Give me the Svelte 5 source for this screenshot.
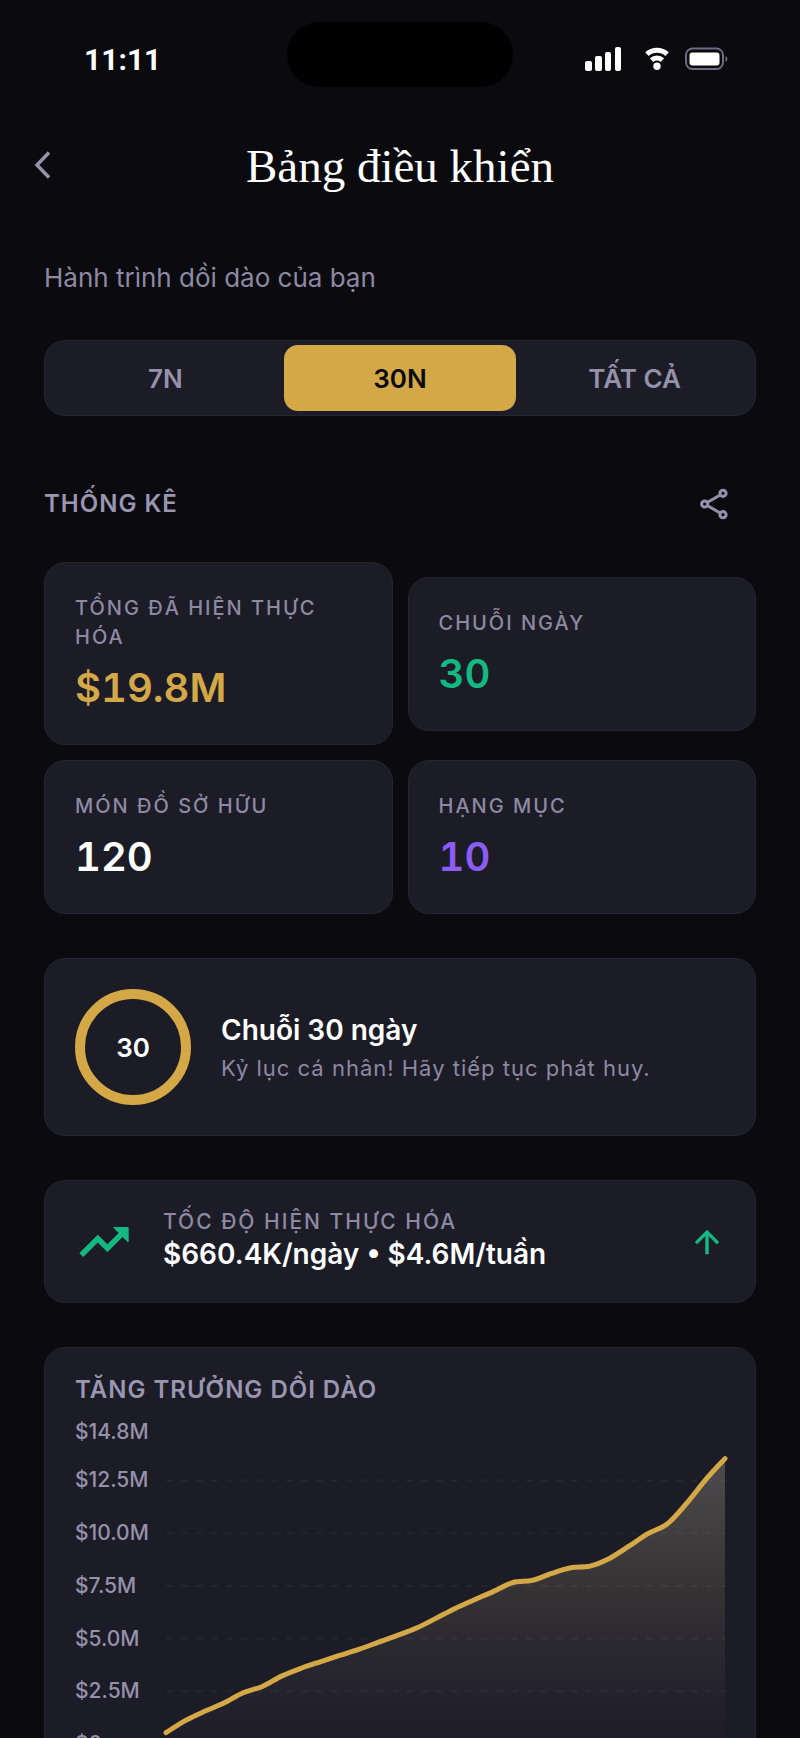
<script lang="ts">
    const ranges = ["7N", "30N", "TẤT CẢ"];
    let selected = $state("30N");

    const stats = [
        { label: "TỔNG ĐÃ HIỆN THỰC HÓA", value: "$19.8M", tone: "gold" },
        { label: "CHUỖI NGÀY", value: "30", tone: "green" },
        { label: "MÓN ĐỒ SỞ HỮU", value: "120", tone: "white" },
        { label: "HẠNG MỤC", value: "10", tone: "purple" },
    ];

    // daily totals, in millions
    const growth = [
        0.54, 1.11, 1.55, 1.94, 2.43, 2.73, 3.22, 3.59, 3.9, 4.2, 4.49, 4.82,
        5.15, 5.5, 5.96, 6.43, 6.84, 7.24, 7.66, 7.76, 8.09, 8.36, 8.44, 8.8,
        9.37, 9.98, 10.44, 11.41, 12.54, 13.54,
    ];
    const ticks = [14.8, 12.5, 10, 7.5, 5, 2.5, 0];
    const max = 14.8;
    const top = 16;
    const plotHeight = 312;
    const left = 91;

    let width = $state(650);

    const y = (v: number) => top + plotHeight * (1 - v / max);

    let points = $derived(
        growth.map((v, i) => [
            left + ((width - left) * i) / (growth.length - 1),
            y(v),
        ])
    );

    // smooth curve through all points
    let line = $derived.by(() => {
        let d = `M${points[0][0]} ${points[0][1]}`;
        for (let i = 0; i < points.length - 1; i++) {
            const p0 = points[i - 1] ?? points[i];
            const p1 = points[i];
            const p2 = points[i + 1];
            const p3 = points[i + 2] ?? p2;
            d += ` C${p1[0] + (p2[0] - p0[0]) / 6} ${p1[1] + (p2[1] - p0[1]) / 6}`;
            d += ` ${p2[0] - (p3[0] - p1[0]) / 6} ${p2[1] - (p3[1] - p1[1]) / 6}`;
            d += ` ${p2[0]} ${p2[1]}`;
        }
        return d;
    });
</script>

<div class="screen">
    <div class="status">
        <span class="time">11:11</span>
        <span class="island"></span>
        <span class="indicators">
            <svg width="36" height="24" viewBox="0 0 36 24" fill="#fff">
                <rect x="0" y="14" width="7" height="10" rx="2" />
                <rect x="10" y="9" width="7" height="15" rx="2" />
                <rect x="20" y="5" width="6" height="19" rx="2" />
                <rect x="30" y="0" width="6" height="24" rx="2" />
            </svg>
            <svg width="24" height="24" viewBox="0 0 24 24">
                <g fill="none" stroke="#fff" stroke-width="5">
                    <path d="M1.9 7.2a15 15 0 0 1 20.2 0" />
                    <path d="M6.6 13.2a8 8 0 0 1 10.8 0" />
                </g>
                <circle cx="12" cy="19.300" r="3.700" fill="#fff" />
            </svg>
            <svg width="43" height="24" viewBox="0 0 43 24">
                <rect x="1" y="1.500" width="37" height="20.500" rx="6.500" fill="none" stroke="#6f6b80" stroke-width="2" />
                <rect x="4.500" y="5.500" width="30" height="13" rx="3" fill="#fff" />
                <path d="M40.500 9v6q2-1 2-3t-2-3z" fill="#6f6b80" />
            </svg>
        </span>
    </div>

    <header>
        <button class="back" aria-label="Quay lại">
            <svg width="18" height="30" viewBox="0 0 18 30">
                <path d="M15 2.500 3 15l12 12.500" fill="none" stroke="currentColor" stroke-width="3.500" />
            </svg>
        </button>
        <h1>Bảng điều khiển</h1>
    </header>

    <main>
        <p class="subtitle">Hành trình dồi dào của bạn</p>

        <div class="segments">
            {#each ranges as range}
                <button
                    class:active={selected === range}
                    aria-pressed={selected === range}
                    onclick={() => (selected = range)}>{range}</button
                >
            {/each}
        </div>

        <div class="section">
            <h2>THỐNG KÊ</h2>
            <button class="share" aria-label="Chia sẻ">
                <svg width="28" height="32" viewBox="0 0 28 32">
                    <g fill="none" stroke="currentColor" stroke-width="3">
                        <circle cx="4.700" cy="16" r="3.100" />
                        <circle cx="23" cy="5.300" r="3.100" />
                        <circle cx="23" cy="26.700" r="3.100" />
                        <path d="M7.600 14.300 20.200 7M7.600 17.700 20.200 25" />
                    </g>
                </svg>
            </button>
        </div>

        <div class="stats">
            {#each stats as stat}
                <div class="card stat">
                    <div class="label">{stat.label}</div>
                    <div class="value {stat.tone}">{stat.value}</div>
                </div>
            {/each}
        </div>

        <section class="card streak">
            <div class="ring">30</div>
            <div class="streak-text">
                <h3>Chuỗi 30 ngày</h3>
                <p>Kỷ lục cá nhân! Hãy tiếp tục phát huy.</p>
            </div>
        </section>

        <section class="card rate">
            <svg class="trend" width="58" height="58" viewBox="0 0 24 24">
                <path
                    d="M16 6l2.290 2.290-4.880 4.880-4-4L2 16.590 3.410 18l6-6 4 4 6.300-6.290L22 12V6z"
                    fill="currentColor"
                    stroke="currentColor"
                    stroke-width="0.400"
                />
            </svg>
            <div class="rate-text">
                <div class="label">TỐC ĐỘ HIỆN THỰC HÓA</div>
                <div class="amount">$660.4K/ngày • $4.6M/tuần</div>
            </div>
            <svg class="up" width="36" height="36" viewBox="0 0 24 24">
                <path
                    d="M4 12l1.410 1.410L11 7.830V20h2V7.830l5.580 5.590L20 12l-8-8z"
                    fill="currentColor"
                    stroke="currentColor"
                    stroke-width="0.300"
                />
            </svg>
        </section>

        <section class="card chart">
            <h2>TĂNG TRƯỞNG DỒI DÀO</h2>
            <div class="plot" bind:clientWidth={width}>
                <svg {width} height="350">
                    <defs>
                        <linearGradient id="area" x1="0" y1="0" x2="0" y2="1">
                            <stop offset="0" stop-color="#4c4b4d" />
                            <stop offset="0.250" stop-color="#413e3f" />
                            <stop offset="0.450" stop-color="#353334" />
                            <stop offset="0.700" stop-color="#29272f" />
                            <stop offset="1" stop-color="#1d1c28" />
                        </linearGradient>
                    </defs>
                    <path d="{line} V{y(0)} H{left} Z" fill="url(#area)" />
                    {#each ticks as tick}
                        <text x="0" y={y(tick) + 7}>
                            {tick ? `$${tick.toFixed(1)}M` : "$0"}
                        </text>
                        {#if tick < max}
                            <line class="grid" x1={left} x2={width} y1={y(tick)} y2={y(tick)} />
                        {/if}
                    {/each}
                    <path class="line" d={line} />
                </svg>
            </div>
        </section>
    </main>
</div>

<style>
    :global(body) {
        background: #0a0a0f;
    }

    .screen {
        height: 100vh;
        overflow-y: auto;
        scrollbar-width: none;
        background: #0a0a0f;
        color: #fff;
        font-family: Inter, "Noto Sans", sans-serif;
    }

    h1,
    h2,
    h3,
    p {
        margin: 0;
    }

    button {
        border: 0;
        padding: 0;
        background: none;
        font: inherit;
        cursor: pointer;
    }

    svg {
        display: block;
        overflow: visible;
    }

    .status {
        display: grid;
        grid-template-columns: 1fr auto 1fr;
        align-items: center;
        padding: 22px 72px 0;
    }

    .time {
        padding: 10px 0 0 12px;
        font-family: Roboto, sans-serif;
        font-size: 30px;
        line-height: 36px;
        font-weight: 700;
    }

    .island {
        width: 226px;
        height: 65px;
        border-radius: 33px;
        background: #000;
    }

    .indicators {
        display: flex;
        justify-content: flex-end;
        gap: 16px;
        padding-top: 8px;
    }

    .indicators svg:first-child {
        margin-right: 8px;
    }

    header {
        display: grid;
        grid-template-columns: 56px 1fr 56px;
        align-items: center;
        margin-top: 44px;
        height: 66px;
    }

    .back {
        display: flex;
        justify-content: flex-end;
        padding-right: 4px;
        color: #9691ab;
    }

    h1 {
        grid-column: 2;
        padding-top: 2px;
        font-family: Baskerville, "Liberation Serif", serif;
        font-size: 47px;
        line-height: 66px;
        font-weight: 400;
        text-align: center;
    }

    main {
        padding: 0 44px 44px;
    }

    .subtitle {
        padding-top: 63px;
        font-size: 26px;
        line-height: 36px;
        color: #8e89a3;
    }

    .segments {
        display: grid;
        grid-template-columns: repeat(3, 1fr);
        gap: 2px;
        margin-top: 44px;
        padding: 4px;
        background: #1c1c27;
        border: 1px solid #25252f;
        border-radius: 21px;
    }

    .segments button {
        height: 66px;
        border-radius: 14px;
        font-size: 26px;
        font-weight: 600;
        color: #9691ab;
    }

    .segments button.active {
        background: #d4a847;
        color: #0a0a0f;
    }

    .section {
        display: flex;
        align-items: center;
        justify-content: space-between;
        height: 58px;
        margin: 59px 28px 29px 0;
    }

    h2 {
        font-size: 24px;
        line-height: 30px;
        font-weight: 600;
        letter-spacing: 1px;
        color: #9a95b0;
    }

    .share {
        color: #9691ab;
    }

    .stats {
        display: grid;
        grid-template-columns: 1fr 1fr;
        align-items: center;
        gap: 15px;
    }

    .card {
        background: #1c1c27;
        border: 1px solid #25252f;
        border-radius: 21px;
        padding: 30px;
    }

    .stat {
        padding-top: 31px;
    }

    .label {
        font-size: 20px;
        line-height: 29px;
        font-weight: 500;
        letter-spacing: 2px;
        color: #8e89a3;
    }

    .value {
        margin-top: 10px;
        font-size: 40px;
        line-height: 52px;
        font-weight: 600;
        font-variant-numeric: tabular-nums;
    }

    .gold {
        color: #d4a847;
    }

    .green {
        color: #14b881;
    }

    .purple {
        color: #8b5cf6;
    }

    .streak {
        display: flex;
        align-items: center;
        gap: 30px;
        margin-top: 44px;
    }

    .ring {
        box-sizing: border-box;
        display: flex;
        align-items: center;
        justify-content: center;
        width: 116px;
        height: 116px;
        border: 10px solid #d4a847;
        border-radius: 50%;
        font-size: 26px;
        font-weight: 600;
    }

    .streak-text {
        padding-top: 2px;
    }

    h3 {
        font-size: 28px;
        line-height: 40px;
        font-weight: 600;
    }

    .streak p {
        font-size: 22px;
        line-height: 36px;
        letter-spacing: 1px;
        color: #8e89a3;
    }

    .rate {
        display: flex;
        align-items: center;
        margin-top: 44px;
        padding: 26px 30px;
    }

    .trend,
    .up {
        color: #14b881;
    }

    .rate-text {
        flex: 1;
        padding: 0 0 4px 30px;
    }

    .rate .label {
        font-size: 21px;
    }

    .amount {
        font-size: 28px;
        line-height: 36px;
        font-weight: 600;
    }

    .chart {
        margin-top: 44px;
        padding-top: 27px;
    }

    .plot {
        margin-top: 11px;
    }

    .plot text {
        font-size: 21px;
        font-weight: 500;
        fill: #9691ab;
    }

    .grid {
        stroke: #fff;
        stroke-opacity: 0.04;
        stroke-width: 2;
        stroke-dasharray: 7 8;
    }

    .line {
        fill: none;
        stroke: #d4a847;
        stroke-width: 5;
        stroke-linecap: round;
    }
</style>
